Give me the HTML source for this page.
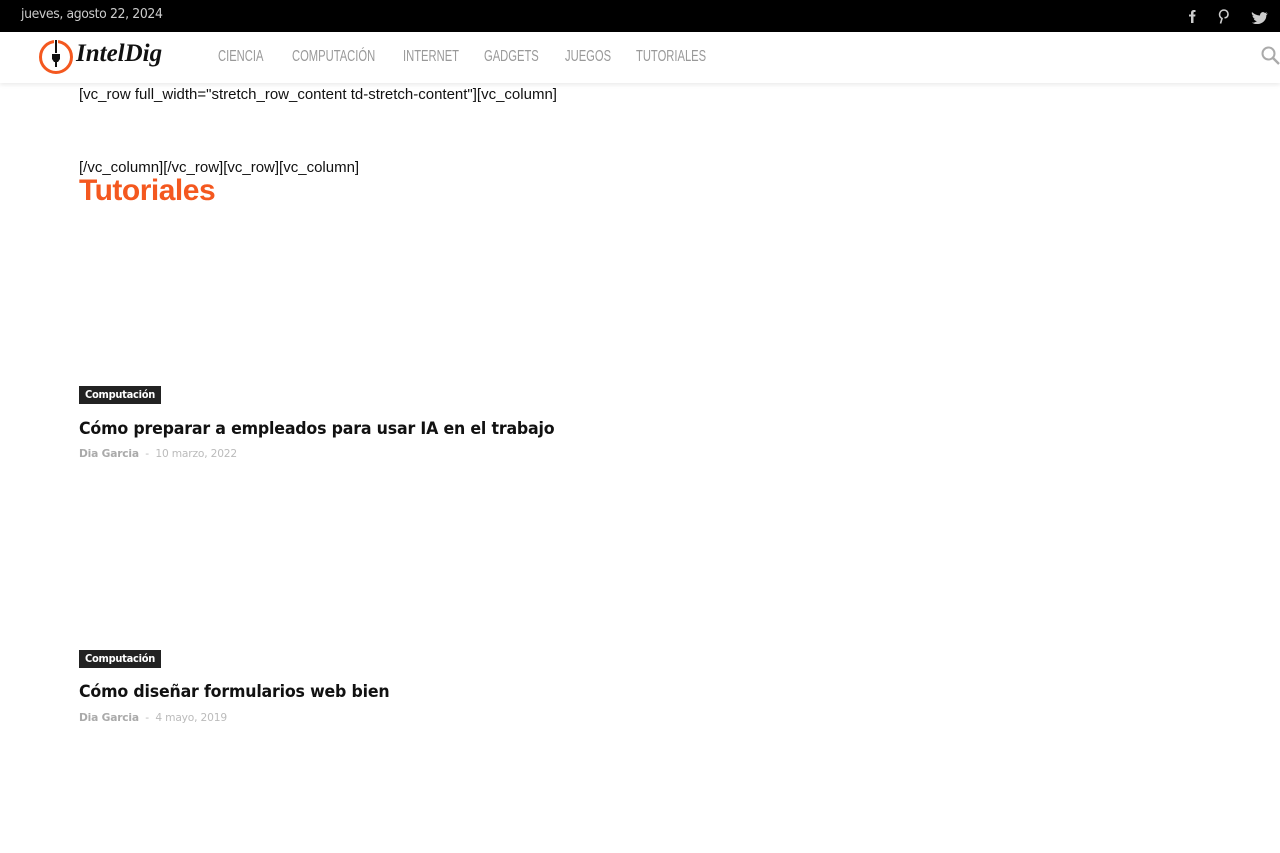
<!DOCTYPE html>
<html><head><meta charset="utf-8"><style>
*{margin:0;padding:0;box-sizing:border-box}
body{width:1280px;height:853px;background:#fff;font-family:"Liberation Sans",sans-serif;position:relative;overflow:hidden}
.top{position:absolute;left:0;top:0;width:1280px;height:32px;background:#000}
.date{position:absolute;left:21px;top:7px;color:#ccc;font-size:13px;font-family:"DejaVu Sans","Liberation Sans",sans-serif;letter-spacing:-0.4px;transform:scaleX(.96);transform-origin:left}
.hdr{position:absolute;left:0;top:32px;width:1280px;height:51px;background:#fff;box-shadow:0 2px 4px rgba(0,0,0,.08)}
.nav{position:absolute;top:48px;font-family:"Liberation Sans Narrow","Liberation Sans",sans-serif;font-size:16px;color:#999;transform:scaleX(.7);transform-origin:left}
.logo{position:absolute;left:76px;top:40px;font-family:"Liberation Serif",serif;font-style:italic;font-weight:bold;font-size:25px;color:#111}
.sc{position:absolute;left:79px;font-size:15px;color:#111}
h1{position:absolute;left:79px;top:174px;font-size:30px;color:#f4581f;font-weight:bold;letter-spacing:-0.5px}
.cat{position:absolute;left:79px;height:18px;width:82px;background:#222;color:#fff;font-size:11px;font-weight:bold;font-family:"DejaVu Sans",sans-serif;padding:2px 0 0 6px;letter-spacing:-0.3px;white-space:nowrap}
.cat span{display:inline-block;transform:scaleX(.9);transform-origin:left}
.t{position:absolute;left:79px;top:0;font-size:17px;font-weight:bold;color:#111;font-family:"DejaVu Sans",sans-serif;letter-spacing:-0.2px;transform:scaleX(.93);transform-origin:left;white-space:nowrap}
.m{position:absolute;left:79px;font-size:11px;color:#bbb;font-family:"DejaVu Sans",sans-serif;letter-spacing:-0.2px;transform:scaleX(.97);transform-origin:left}
.m b{color:#aaa}
</style></head><body>
<div class="top"><div class="date">jueves, agosto 22, 2024</div>
<svg style="position:absolute;left:1184px;top:8px" width="90" height="16" viewBox="0 0 90 16">
<path d="M7 15V8.5H5V6.5h2V5c0-2 1-3 3-3h1.5v2H10.5c-.7 0-1 .3-1 1v1.5h2l-.3 2H9.5V15z" fill="#ccc"/>
<path d="M40 2a4.5 4.5 0 0 0-2 8.5l-1.5 5M40 2a4 4 0 0 1 4 4c0 3-2 4-3.5 3.5" stroke="#ccc" stroke-width="1.6" fill="none"/>
<path d="M68 4c2 2 5 3.5 8 3.5 0-3 3-4.5 5-2.5l2-.8-1 1.8 2-.5-1.6 1.6c0 6-5 9-9.5 9-2 0-3.5-.5-5-1.5 2 .2 3.5-.3 5-1.5-1.5 0-2.8-1-3.2-2.3h1.5c-1.6-.4-2.7-1.8-2.7-3.4.5.3 1 .4 1.5.4C68 7.2 67.4 5.5 68 4z" fill="#ccc"/>
</svg></div>
<div class="hdr"></div>
<svg style="position:absolute;left:38px;top:38px" width="38" height="38" viewBox="0 0 38 38"><circle cx="18" cy="19" r="15.5" stroke="#f4581f" stroke-width="3" fill="none"/><rect x="16" y="1" width="4" height="14" fill="#fff"/><rect x="17" y="2" width="2" height="13" fill="#111"/><path d="M14 16h8v5l-2 3h-4l-2-3z" fill="#111"/><rect x="17" y="24" width="2" height="5" fill="#111"/></svg>
<div class="logo">IntelDig</div>
<div class="nav" style="left:218px">CIENCIA</div>
<div class="nav" style="left:292px">COMPUTACIÓN</div>
<div class="nav" style="left:403px">INTERNET</div>
<div class="nav" style="left:484px">GADGETS</div>
<div class="nav" style="left:565px">JUEGOS</div>
<div class="nav" style="left:636px">TUTORIALES</div>
<svg style="position:absolute;left:1261px;top:46px" width="19" height="20"><circle cx="7.5" cy="7.5" r="6" stroke="#aaa" stroke-width="2" fill="none"/><path d="M12 12l6 6" stroke="#aaa" stroke-width="2.4"/></svg>
<div class="sc" style="top:86px">[vc_row full_width="stretch_row_content td-stretch-content"][vc_column]</div>
<div class="sc" style="top:159px">[/vc_column][/vc_row][vc_row][vc_column]</div>
<h1>Tutoriales</h1>
<div class="cat" style="top:386px"><span>Computación</span></div>
<div class="t" style="top:419px">Cómo preparar a empleados para usar IA en el trabajo</div>
<div class="m" style="top:447px"><b>Dia Garcia</b> &nbsp;-&nbsp; 10 marzo, 2022</div>
<div class="cat" style="top:650px"><span>Computación</span></div>
<div class="t" style="top:682px">Cómo diseñar formularios web bien</div>
<div class="m" style="top:711px"><b>Dia Garcia</b> &nbsp;-&nbsp; 4 mayo, 2019</div>
</body></html>
